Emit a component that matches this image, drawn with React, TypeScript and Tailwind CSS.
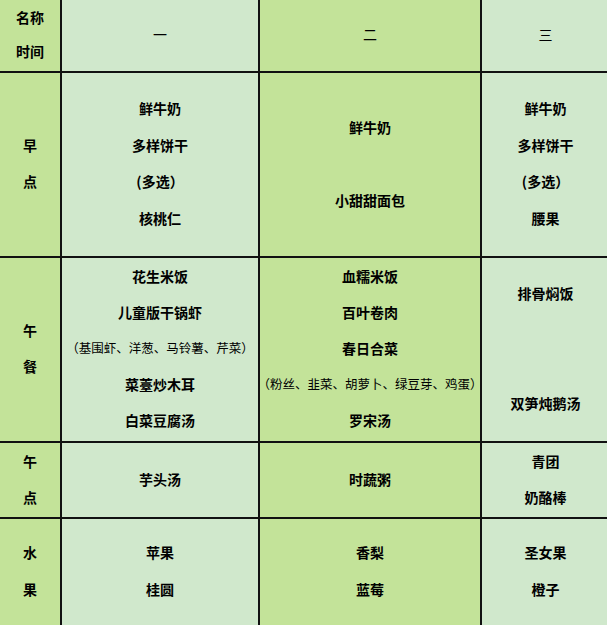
import React from "react";

type Line = { t: string; small?: boolean } | null;

const DARK = "bg-[#c3e399]";
const LIGHT = "bg-[#d0e8cc]";

function Cell({ lines, bg, light }: { lines: Line[]; bg: string; light?: boolean }) {
  return (
    <div className={`${bg} flex flex-col items-center justify-center pb-[2px]`}>
      {lines.map((l, i) =>
        l === null ? (
          <div key={i} className="h-[36.5px]" />
        ) : (
          <div
            key={i}
            className={`h-[36.5px] flex items-center whitespace-nowrap ${
              l.small ? "text-[12.5px] font-normal" : light ? "text-[14px] font-normal" : "text-[14px] font-bold"
            }`}
          >
            {l.t}
          </div>
        )
      )}
    </div>
  );
}

const L = (t: string): Line => ({ t });
const S = (t: string): Line => ({ t, small: true });

export default function App() {
  return (
    <div
      className="w-[607px] h-[625px] overflow-hidden bg-[#c3e399]"
      style={{ fontFamily: '"Noto Sans CJK SC", "Noto Sans", sans-serif' }}
    >
      <div className="grid grid-cols-[60px_196px_220px_127px] grid-rows-[71px_183px_183px_74px_106px] gap-[2px] bg-[#111] text-black">
        {/* header */}
        <Cell bg={DARK} lines={[L("名称"), L("时间")]} />
        <Cell bg={LIGHT} light lines={[L("一")]} />
        <Cell bg={DARK} light lines={[L("二")]} />
        <Cell bg={LIGHT} light lines={[L("三")]} />

        {/* 早点 */}
        <Cell bg={DARK} lines={[L("早"), L("点")]} />
        <Cell bg={LIGHT} lines={[L("鲜牛奶"), L("多样饼干"), L("(多选）"), L("核桃仁")]} />
        <Cell bg={DARK} lines={[L("鲜牛奶"), null, L("小甜甜面包")]} />
        <Cell bg={LIGHT} lines={[L("鲜牛奶"), L("多样饼干"), L("(多选）"), L("腰果")]} />

        {/* 午餐 */}
        <Cell bg={DARK} lines={[L("午"), L("餐")]} />
        <Cell
          bg={LIGHT}
          lines={[L("花生米饭"), L("儿童版干锅虾"), S("（基围虾、洋葱、马铃薯、芹菜）"), L("菜薹炒木耳"), L("白菜豆腐汤")]}
        />
        <Cell
          bg={DARK}
          lines={[L("血糯米饭"), L("百叶卷肉"), L("春日合菜"), S("（粉丝、韭菜、胡萝卜、绿豆芽、鸡蛋）"), L("罗宋汤")]}
        />
        <Cell bg={LIGHT} lines={[L("排骨焖饭"), null, null, L("双笋炖鹅汤")]} />

        {/* 午点 */}
        <Cell bg={DARK} lines={[L("午"), L("点")]} />
        <Cell bg={LIGHT} lines={[L("芋头汤")]} />
        <Cell bg={DARK} lines={[L("时蔬粥")]} />
        <Cell bg={LIGHT} lines={[L("青团"), L("奶酪棒")]} />

        {/* 水果 */}
        <Cell bg={DARK} lines={[L("水"), L("果")]} />
        <Cell bg={LIGHT} lines={[L("苹果"), L("桂圆")]} />
        <Cell bg={DARK} lines={[L("香梨"), L("蓝莓")]} />
        <Cell bg={LIGHT} lines={[L("圣女果"), L("橙子")]} />
      </div>
    </div>
  );
}
